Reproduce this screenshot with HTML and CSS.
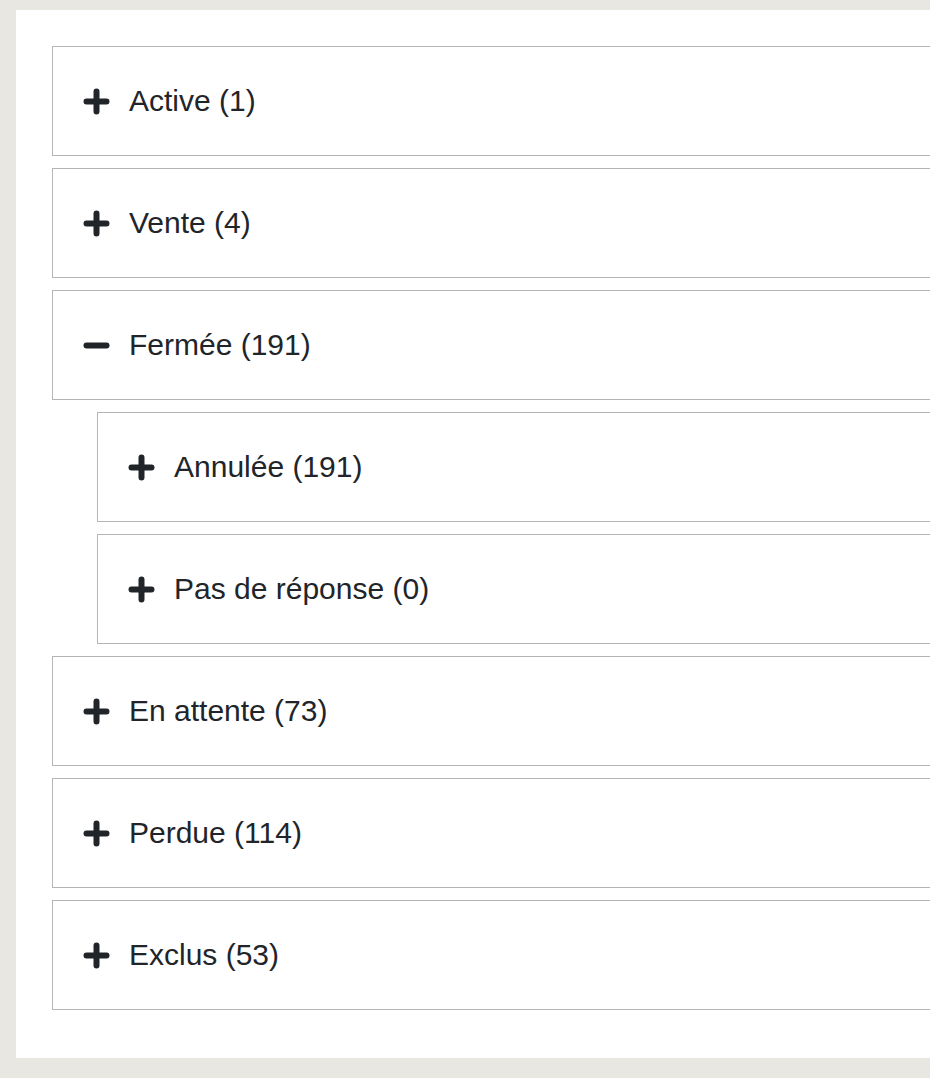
FILE: index.html
```html
<!DOCTYPE html>
<html lang="fr">
<head>
    <meta charset="UTF-8">
    <meta name="viewport" content="width=device-width, initial-scale=1.0">
    <title>Statuts</title>
    <link rel="stylesheet" href="styles.css">
</head>
<body>
    <div id="panel">
        <ul class="groups">
            <li class="group">
                <div class="head">
                    <svg class="ico" viewBox="0 0 27 27"><path d="M13.5 3.5v20M3.5 13.5h20"/></svg>
                    <span>Active (1)</span>
                </div>
            </li>
            <li class="group">
                <div class="head">
                    <svg class="ico" viewBox="0 0 27 27"><path d="M13.5 3.5v20M3.5 13.5h20"/></svg>
                    <span>Vente (4)</span>
                </div>
            </li>
            <li class="group open">
                <div class="head">
                    <svg class="ico" viewBox="0 0 27 27"><path d="M3.5 13.5h20"/></svg>
                    <span>Fermée (191)</span>
                </div>
                <ul class="groups sub">
                    <li class="group">
                        <div class="head">
                            <svg class="ico" viewBox="0 0 27 27"><path d="M13.5 3.5v20M3.5 13.5h20"/></svg>
                            <span>Annulée (191)</span>
                        </div>
                    </li>
                    <li class="group">
                        <div class="head">
                            <svg class="ico" viewBox="0 0 27 27"><path d="M13.5 3.5v20M3.5 13.5h20"/></svg>
                            <span>Pas de réponse (0)</span>
                        </div>
                    </li>
                </ul>
            </li>
            <li class="group">
                <div class="head">
                    <svg class="ico" viewBox="0 0 27 27"><path d="M13.5 3.5v20M3.5 13.5h20"/></svg>
                    <span>En attente (73)</span>
                </div>
            </li>
            <li class="group">
                <div class="head">
                    <svg class="ico" viewBox="0 0 27 27"><path d="M13.5 3.5v20M3.5 13.5h20"/></svg>
                    <span>Perdue (114)</span>
                </div>
            </li>
            <li class="group">
                <div class="head">
                    <svg class="ico" viewBox="0 0 27 27"><path d="M13.5 3.5v20M3.5 13.5h20"/></svg>
                    <span>Exclus (53)</span>
                </div>
            </li>
        </ul>
    </div>
</body>
</html>
```

FILE: styles.css
```css
*{
    margin: 0;
    padding: 0;
    list-style: none;
    box-sizing: border-box;
}
html, body{
    overflow: hidden;
}
body{
    background-color: #e8e7e2;
    padding: 10px 0 20px 16px;
    font-family: "Liberation Sans", Arial, sans-serif;
    color: #212529;
}
#panel{
    width: 1000px;
    background-color: #ffffff;
    padding: 36px 0 36px 36px;
}
.group .head{
    display: flex;
    align-items: center;
    height: 110px;
    border: 1px solid #b5b5b5;
    padding-left: 30px;
    margin-bottom: 12px;
    font-size: 30px;
}
.sub{
    padding-left: 45px;
}
.ico{
    width: 27px;
    height: 27px;
    margin-right: 19px;
    flex-shrink: 0;
}
.ico path{
    fill: none;
    stroke: #212529;
    stroke-width: 6;
    stroke-linecap: round;
}
```
